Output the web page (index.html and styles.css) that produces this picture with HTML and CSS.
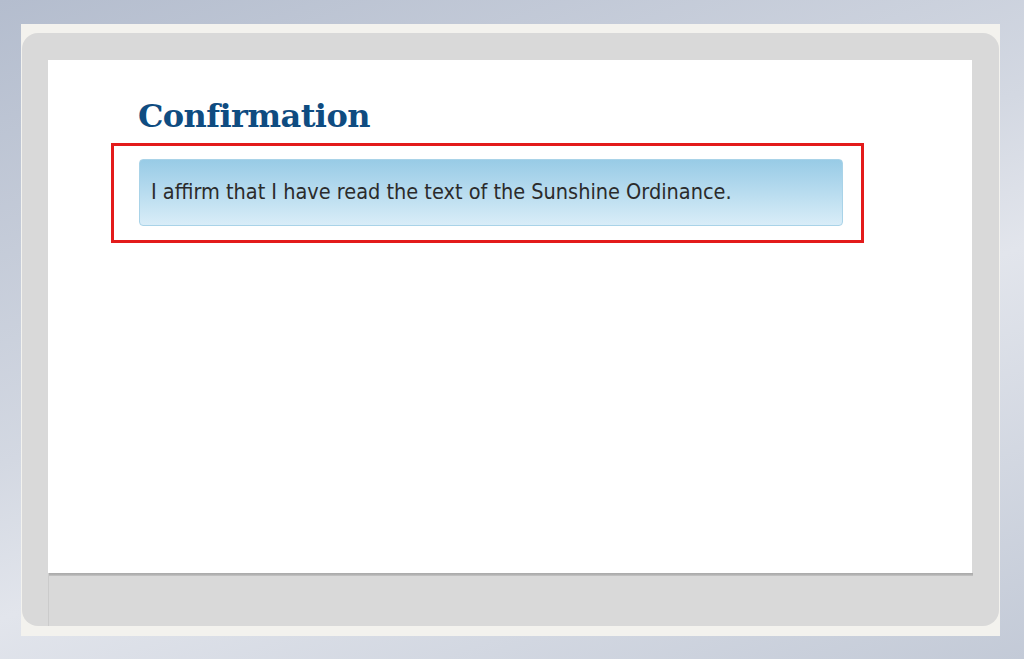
FILE: index.html
```html
<!DOCTYPE html>
<html lang="en">
  <head>
    <meta charset="UTF-8" />
    <title>Confirmation</title>
    <link rel="stylesheet" href="styles.css">
  </head>
  <body>
    <!-- 外框 -->
    <div class="frame">
      <div class="panel">
        <!-- 内容区 -->
        <div class="content">
          <h1 class="title">Confirmation</h1>
          <div class="highlight">
            <div class="notice">I affirm that I have read the text of the Sunshine Ordinance.</div>
          </div>
        </div>
        <!-- 底部栏 -->
        <div class="footer"></div>
      </div>
    </div>
  </body>
</html>
```

FILE: styles.css
```css
html, body {
  height: 100%;
}

body {
  margin: 0;
  background: linear-gradient(160deg, #b4bdce 0%, #d3d8e2 45%, #e2e5ec 60%, #c3cad7 100%);
  overflow: hidden;
}

.frame {
  margin: 24px 24px 0 21px;
  height: 612px;
  box-sizing: border-box;
  background-color: #f3f2ee;
  padding: 9px 1px 10px 1px;
}

.panel {
  height: 100%;
  background-color: #d9d9d9;
  border-radius: 16px;
  padding: 27px 27px 0 26px;
  box-sizing: border-box;
  display: flex;
  flex-direction: column;
}

.content {
  height: 513px;
  background-color: #fff;
  padding: 0 0 0 63px;
  box-sizing: border-box;
}

.title {
  margin: 36px 0 0 27px;
  font-family: "DejaVu Serif", Georgia, serif;
  font-weight: bold;
  font-size: 32px;
  line-height: 40px;
  color: #0f4c81;
  letter-spacing: -0.6px;
}

.highlight {
  width: 753px;
  height: 100px;
  box-sizing: border-box;
  border: 3px solid #e31b1b;
  margin-top: 7px;
  padding: 13px 0 0 25px;
}

.notice {
  width: 704px;
  height: 67px;
  box-sizing: border-box;
  border: 1px solid #a9d3e8;
  border-radius: 4px;
  background: linear-gradient(to bottom, #98cbe6 0%, #b8dcef 50%, #d9edf8 100%);
  padding: 19px 0 0 11px;
  font-family: "DejaVu Sans Condensed", "DejaVu Sans", Tahoma, sans-serif;
  font-size: 21.5px;
  line-height: 26px;
  color: #2b2b2b;
}

.footer {
  flex: 1;
  border-left: 1px solid #cbcbcb;
  margin-right: -27px;
  background: linear-gradient(to bottom, #a9a9a9 0, #b4b4b4 2px, #c8c8c8 3px, #d9d9d9 3px) no-repeat;
  background-size: 924px 4px;
}
```
